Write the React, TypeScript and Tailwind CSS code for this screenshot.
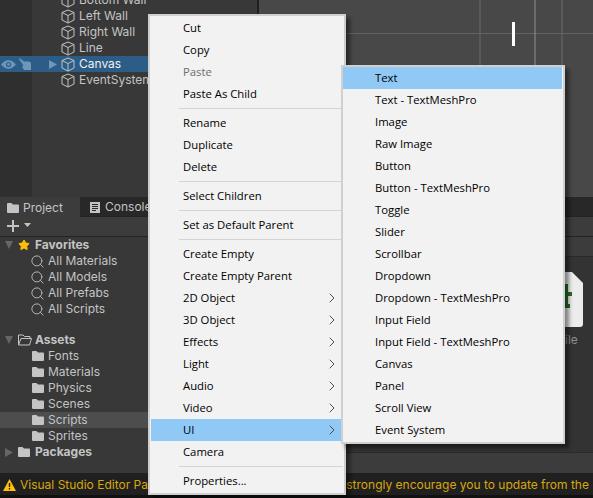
import { Search, Star, ChevronRight } from "lucide-react"

const unityFont = "font-['Inter',sans-serif]"
const menuFont = "font-['Open_Sans',sans-serif]"

const hierarchy = ["Bottom Wall", "Left Wall", "Right Wall", "Line", "Canvas", "EventSystem"]
const favorites = ["All Materials", "All Models", "All Prefabs", "All Scripts"]
const assets = ["Fonts", "Materials", "Physics", "Scenes", "Scripts", "Sprites"]

type MenuRow = { label?: string; sep?: boolean; arrow?: boolean; off?: boolean; active?: boolean }

const mainMenu: MenuRow[] = [
  { label: "Cut" },
  { label: "Copy" },
  { label: "Paste", off: true },
  { label: "Paste As Child" },
  { sep: true },
  { label: "Rename" },
  { label: "Duplicate" },
  { label: "Delete" },
  { sep: true },
  { label: "Select Children" },
  { sep: true },
  { label: "Set as Default Parent" },
  { sep: true },
  { label: "Create Empty" },
  { label: "Create Empty Parent" },
  { label: "2D Object", arrow: true },
  { label: "3D Object", arrow: true },
  { label: "Effects", arrow: true },
  { label: "Light", arrow: true },
  { label: "Audio", arrow: true },
  { label: "Video", arrow: true },
  { label: "UI", arrow: true, active: true },
  { label: "Camera" },
  { sep: true },
  { label: "Properties..." },
]

const uiMenu = [
  "Text",
  "Text - TextMeshPro",
  "Image",
  "Raw Image",
  "Button",
  "Button - TextMeshPro",
  "Toggle",
  "Slider",
  "Scrollbar",
  "Dropdown",
  "Dropdown - TextMeshPro",
  "Input Field",
  "Input Field - TextMeshPro",
  "Canvas",
  "Panel",
  "Scroll View",
  "Event System",
]

function Cube() {
  return (
    <svg width="14" height="15" viewBox="0 0 14 15" fill="none" stroke="#c4c4c4" strokeWidth="1" className="shrink-0">
      <path d="M7 1 L13 3.5 V11 L7 14 L1 11 V3.5 Z" />
      <path d="M1 3.5 L7 6.5 L13 3.5 M7 6.5 V14" />
    </svg>
  )
}

function Folder({ open = false }: { open?: boolean }) {
  if (open) {
    return (
      <svg width="14" height="12" viewBox="0 0 14 12" fill="none" className="shrink-0">
        <path d="M0.5 11 V1 H5 L6.5 2.5 H12 V4.5 H3 L0.5 11 H11.5 L13.5 4.5 H3" stroke="#c4c4c4" strokeWidth="1" />
      </svg>
    )
  }
  return (
    <svg width="12" height="10" viewBox="0 0 12 10" className="shrink-0">
      <path d="M0 1 Q0 0 1 0 H4.5 L6 1.5 H11 Q12 1.5 12 2.5 V9 Q12 10 11 10 H1 Q0 10 0 9 Z" fill="#c4c4c4" />
    </svg>
  )
}

function TriDown() {
  return (
    <svg width="8" height="8" viewBox="0 0 8 8" className="shrink-0">
      <path d="M0 0 H8 L4 8 Z" fill="#666666" />
    </svg>
  )
}

function TriRight({ color = "#666666" }: { color?: string }) {
  return (
    <svg width="8" height="9" viewBox="0 0 8 9" className="shrink-0">
      <path d="M0 0 L8 4.5 L0 9 Z" fill={color} />
    </svg>
  )
}

function VisibilityIcons() {
  return (
    <div className="w-[32px] flex items-center pl-px shrink-0">
      <svg width="15" height="11" viewBox="0 0 15 11">
        <path d="M0 5.5 Q7.5 -3 15 5.5 Q7.5 14 0 5.5 Z" fill="#6f97ba" />
        <circle cx="7.5" cy="5.5" r="2.6" fill="#2c5d87" />
        <circle cx="7.5" cy="5.5" r="1.4" fill="#6f97ba" />
      </svg>
      <svg width="12" height="12" viewBox="0 0 12 12" className="ml-[3px]">
        <path d="M0.5 0 L5 3.5 H9.5 Q12 3.5 12 6 V12 H5 L3 8.5 L4.5 7.5 L0 1 Z" fill="#6f97ba" />
      </svg>
    </div>
  )
}

function HierarchyPanel() {
  return (
    <div className="w-[257px] h-full flex flex-col bg-[#383838] overflow-hidden">
      <div className="-mt-[8px]">
        {hierarchy.map((name) => {
          const selected = name === "Canvas"
          return (
            <div key={name} className={`h-[16px] flex items-center ${selected ? "bg-[#2c5d87] text-[#f0f0f0]" : "text-[#c4c4c4]"}`}>
              {selected ? <VisibilityIcons /> : <div className="w-[32px] h-full bg-[#2f2f2f] shrink-0" />}
              <div className="w-[29px] flex justify-end pr-[4px] shrink-0">
                {selected && <TriRight color="#6f97ba" />}
              </div>
              <Cube />
              <span className="ml-[4px] text-[12px] leading-none whitespace-nowrap">{name}</span>
            </div>
          )
        })}
      </div>
      <div className="flex-1 w-[32px] bg-[#2f2f2f]" />
    </div>
  )
}

function SceneView() {
  return (
    <div className="relative flex-1 h-full bg-[#484848] overflow-hidden">
      {/* grid lines + the little white bar of the canvas */}
      <svg width="334" height="196" className="absolute left-0 top-0">
        <path d="M221 0 V196 M303 0 V196" stroke="#6b6b6b" />
        <path d="M0 33.5 H334" stroke="#636363" />
        <path d="M276 0 V196" stroke="#909090" />
        <rect x="253" y="22" width="3" height="24" fill="#ffffff" />
      </svg>
    </div>
  )
}

function TreeRow({ label, active = false }: { label: string; active?: boolean }) {
  return (
    <div className={`h-[16px] flex items-center pl-[32px] ${active ? "bg-[#4d4d4d]" : ""}`}>
      <Folder />
      <span className="ml-[4px] text-[12px] leading-none text-[#c4c4c4] whitespace-nowrap">{label}</span>
    </div>
  )
}

function ProjectPanel() {
  return (
    <div className="flex-1 flex flex-col min-h-0">
      <div className="h-[20px] flex bg-[#282828] border-b border-[#232323]">
        <div className="w-[80px] h-[20px] bg-[#3c3c3c] flex items-center pl-[7px] pt-px gap-[4px] text-[12px] text-[#c4c4c4]">
          <Folder />
          Project
        </div>
        <div className="flex items-center pl-[10px] pt-px gap-[5px] text-[12px] text-[#c4c4c4]">
          <svg width="10" height="11" viewBox="0 0 10 11" className="shrink-0">
            <rect width="10" height="11" fill="#c4c4c4" />
            <path d="M2 2.5 H8 M2 4.5 H8 M2 6.5 H8 M2 8.5 H6" stroke="#282828" />
          </svg>
          Console
        </div>
      </div>
      <div className="h-[20px] bg-[#3c3c3c] border-b border-[#232323] flex items-center pl-[7px] pb-px gap-[5px]">
        <svg width="12" height="12" viewBox="0 0 12 12">
          <path d="M6 0 V12 M0 6 H12" stroke="#c4c4c4" strokeWidth="2" />
        </svg>
        <svg width="7" height="4" viewBox="0 0 7 4" className="mb-[2px]">
          <path d="M0 0 H7 L3.5 4 Z" fill="#c4c4c4" />
        </svg>
      </div>

      <div className="flex-1 flex min-h-0 bg-[#383838]">
        <div className="w-[148px]">
          <div className="h-[16px] flex items-center pl-[5px]">
            <TriDown />
            <Star size={12} className="ml-[5px] text-[#ffc107] fill-[#ffc107]" />
            <span className="ml-[5px] text-[12px] font-bold leading-none text-[#c4c4c4]">Favorites</span>
          </div>
          {favorites.map((name) => (
            <div key={name} className="h-[16px] flex items-center pl-[30px]">
              <Search size={15} strokeWidth={1.4} className="text-[#c4c4c4] shrink-0" />
              <span className="ml-[3px] text-[12px] leading-none text-[#c4c4c4]">{name}</span>
            </div>
          ))}
          <div className="h-[15px]" />
          <div className="h-[16px] flex items-center pl-[5px]">
            <TriDown />
            <span className="ml-[5px]">
              <Folder open />
            </span>
            <span className="ml-[3px] text-[12px] font-bold leading-none text-[#c4c4c4]">Assets</span>
          </div>
          {assets.map((name) => (
            <TreeRow key={name} label={name} active={name === "Scripts"} />
          ))}
          <div className="h-[16px] flex items-center pl-[5px]">
            <TriRight />
            <span className="ml-[5px]">
              <Folder />
            </span>
            <span className="ml-[5px] text-[12px] font-bold leading-none text-[#c4c4c4]">Packages</span>
          </div>
        </div>
        <div className="flex-1 relative bg-[#333333]">
          <div className="h-[20px] bg-[#3c3c3c] border-b border-[#2a2a2a]" />
          {/* script asset peeking out from behind the menu */}
          <svg width="18" height="55" viewBox="0 0 18 55" className="absolute left-[417px] top-[35px]">
            <path d="M0 0 H7 L18 11 V52 Q18 55 15 55 H0 Z" fill="#ececec" />
            <rect x="0" y="12" width="3" height="24" fill="#256b25" />
            <rect x="0" y="20" width="7" height="4" fill="#256b25" />
            <rect x="0" y="32" width="5" height="4" fill="#256b25" />
          </svg>
          <span className="absolute left-[417px] top-[96px] text-[12px] leading-[14px] text-[#8f8f8f]">ile</span>
          <div className="absolute left-0 right-0 bottom-0 h-[21px] bg-[#3c3c3c] border-t border-[#2a2a2a]" />
        </div>
      </div>

      <div className="h-[22px] shrink-0 bg-[#202020] flex items-center pl-[3px] pt-px gap-[4px] text-[12px] text-[#d9a60c] whitespace-nowrap overflow-hidden">
        <svg width="13" height="12" viewBox="0 0 13 12" className="shrink-0">
          <path d="M6.5 0 L13 12 H0 Z" fill="#ffc107" />
          <path d="M6.5 4 V8 M6.5 9 V10.5" stroke="#202020" strokeWidth="1.4" />
        </svg>
        Visual Studio Editor Package version 2.01 is available, we strongly encourage you to update from the
      </div>
      <div className="h-[3px] shrink-0 bg-[#111111]" />
    </div>
  )
}

function MainMenu() {
  return (
    <div className={`absolute left-[148px] top-[14px] w-[198px] h-[481px] bg-[#f2f2f2] border-2 border-[#d0d0d0] border-r-[#cccccc] shadow-[4px_4px_4px_rgba(0,0,0,0.45)] ${menuFont}`}>
      <div className="pl-px pr-px pt-px">
        {mainMenu.map((row, i) =>
          row.sep ? (
            <div key={i} className="h-[7px] pt-[3px] pl-[28px]">
              <div className="h-px bg-[#d4d4d4]" />
            </div>
          ) : (
            <div
              key={i}
              className={`h-[22px] flex items-center justify-between pl-[32px] pr-[3px] text-[11.3px] leading-none ${row.active ? "bg-[#90c8f6]" : ""} ${row.off ? "text-[#6d6d6d]" : "text-black"}`}
            >
              <span>{row.label}</span>
              {row.arrow && <ChevronRight size={16} strokeWidth={1.4} className="text-[#444444]" />}
            </div>
          ),
        )}
      </div>
    </div>
  )
}

function UiMenu() {
  return (
    <div className={`absolute left-[341px] top-[65px] w-[224px] h-[379px] bg-[#f2f2f2] border-2 border-[#d0d0d0] shadow-[4px_4px_4px_rgba(0,0,0,0.45)] ${menuFont}`}>
      {uiMenu.map((label, i) => (
        <div
          key={label}
          className={`h-[22px] flex items-center pl-[32px] mr-px text-[11.3px] leading-none text-black ${i === 0 ? "bg-[#90c8f6]" : ""}`}
        >
          {label}
        </div>
      ))}
    </div>
  )
}

export default function App() {
  return (
    <div className={`relative w-[593px] h-[498px] overflow-hidden flex flex-col bg-[#383838] ${unityFont}`}>
      <div className="h-[197px] shrink-0 flex">
        <HierarchyPanel />
        <div className="w-[2px] h-full bg-[#1f1f1f]" />
        <SceneView />
      </div>
      <ProjectPanel />
      <MainMenu />
      <UiMenu />
    </div>
  )
}
